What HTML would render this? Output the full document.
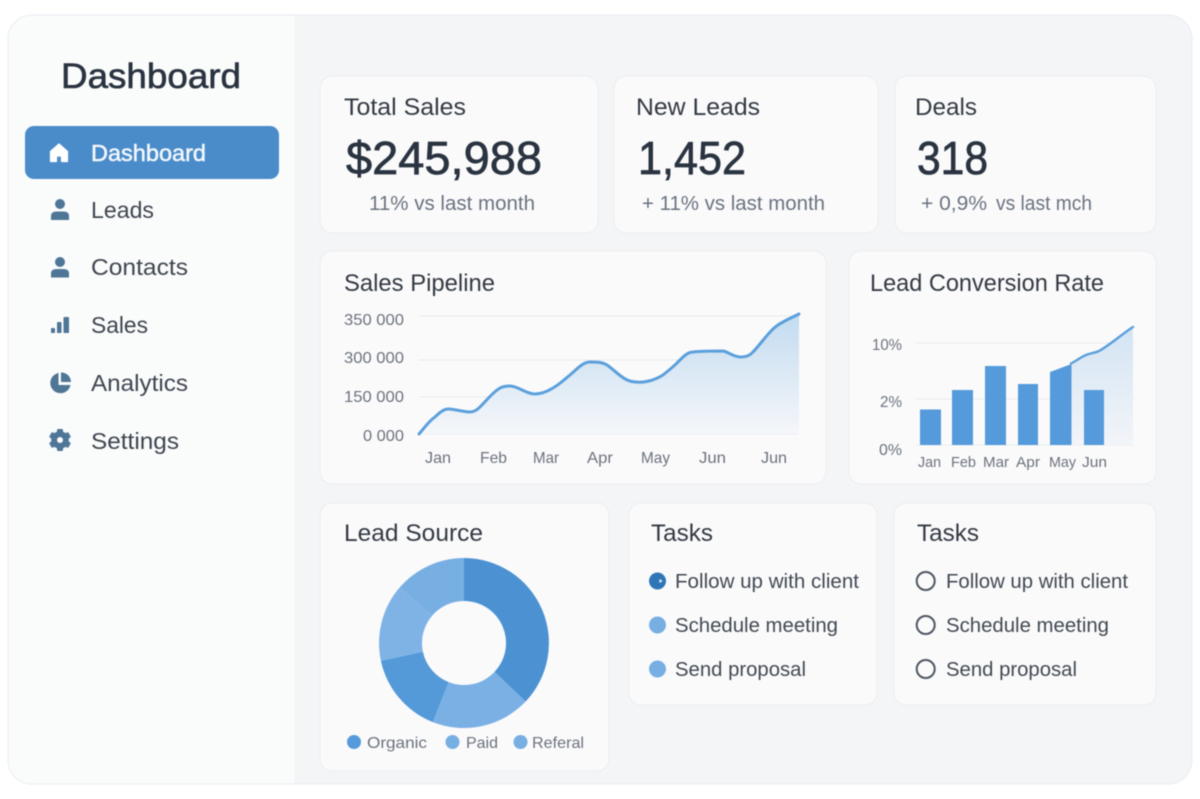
<!DOCTYPE html>
<html lang="en">
<head>
<meta charset="utf-8">
<title>Dashboard</title>
<style>
html,body{margin:0;padding:0;background:#fff;width:1200px;height:799px;overflow:hidden}
svg{display:block;filter:blur(.4px)}
text{font-family:"Liberation Sans",sans-serif}
.card{fill:#fafafb;stroke:#ebedf0;stroke-width:1}
.h{font-size:24px;fill:#343a43}
.big{font-size:46px;fill:#2a3340;stroke:#2a3340;stroke-width:.7}
.sub{font-size:20px;fill:#6b7380}
.nav{font-size:23px;fill:#3f4650}
.ax{font-size:16px;fill:#6c727c}
.task{font-size:20.5px;fill:#424953}
.grid{stroke:#e9ebee;stroke-width:1}
.ic{fill:#4f7697}
.bar{fill:#559ada}
</style>
</head>
<body>
<svg width="1200" height="799" viewBox="0 0 1200 799" xmlns="http://www.w3.org/2000/svg">
<defs>
<linearGradient id="g1" gradientUnits="userSpaceOnUse" x1="0" y1="314" x2="0" y2="434">
<stop offset="0" stop-color="#c3dbf0"/><stop offset="1" stop-color="#f5f7fa"/>
</linearGradient>
<linearGradient id="g2" gradientUnits="userSpaceOnUse" x1="0" y1="326" x2="0" y2="445">
<stop offset="0" stop-color="#d3e4f3"/><stop offset="1" stop-color="#f2f5f9"/>
</linearGradient>
<clipPath id="panel"><rect x="8" y="15" width="1184" height="769" rx="24"/></clipPath>
</defs>

<rect width="1200" height="799" fill="#ffffff"/>
<g clip-path="url(#panel)">
<rect x="8" y="15" width="1184" height="769" fill="#f4f5f6"/>
<rect x="8" y="15" width="287" height="769" fill="#fafbfb"/>
<rect x="295" y="15" width="1" height="769" fill="#eef0f2"/>
</g>
<rect x="8" y="15" width="1184" height="769" rx="24" fill="none" stroke="#e8edf3" stroke-width="1"/>

<!-- Sidebar -->
<text x="61" y="88" font-size="35" fill="#2a3340" stroke="#2a3340" stroke-width=".6" textLength="180" lengthAdjust="spacingAndGlyphs">Dashboard</text>
<rect x="25" y="126" width="254" height="53" rx="9" fill="#4a8cca"/>
<path d="M59 144 L67.5 151.5 V161.5 H61.5 V156 H56.5 V161.5 H50.5 V151.5 Z" fill="#fff" stroke="#fff" stroke-width="1.2" stroke-linejoin="round"/>
<text x="91" y="161" font-size="23" fill="#f2f7fc" stroke="#f2f7fc" stroke-width=".5" textLength="115" lengthAdjust="spacingAndGlyphs">Dashboard</text>

<circle class="ic" cx="60" cy="204" r="5"/>
<path class="ic" d="M51 220 V216 Q51 211.5 57 211.5 H63 Q69 211.5 69 216 V220 Z"/>
<text class="nav" x="91" y="218" textLength="63" lengthAdjust="spacingAndGlyphs">Leads</text>

<circle class="ic" cx="60" cy="262" r="5"/>
<path class="ic" d="M51 277.5 V273.5 Q51 269 57 269 H63 Q69 269 69 273.5 V277.5 Z"/>
<text class="nav" x="91" y="275" textLength="97" lengthAdjust="spacingAndGlyphs">Contacts</text>

<rect class="ic" x="51" y="328" width="4" height="5" rx=".8"/>
<rect class="ic" x="57" y="322" width="4.5" height="11" rx=".8"/>
<rect class="ic" x="63.5" y="317" width="5.5" height="16" rx=".8"/>
<text class="nav" x="91" y="333" textLength="57" lengthAdjust="spacingAndGlyphs">Sales</text>

<path class="ic" d="M58.5 373 A10.2 10.2 0 1 0 70.5 385 H58.5 Z"/>
<path class="ic" d="M61 372.5 A9.7 9.7 0 0 1 71 382 H61 Z"/>
<text class="nav" x="91" y="391" textLength="97" lengthAdjust="spacingAndGlyphs">Analytics</text>

<g transform="translate(60 440)">
<circle class="ic" r="8.8"/>
<g class="ic">
<rect x="-3" y="-11" width="6" height="22" rx="1"/>
<rect x="-3" y="-11" width="6" height="22" rx="1" transform="rotate(60)"/>
<rect x="-3" y="-11" width="6" height="22" rx="1" transform="rotate(120)"/>
</g>
<circle r="3" fill="#fafbfb"/>
</g>
<text class="nav" x="91" y="449" textLength="88" lengthAdjust="spacingAndGlyphs">Settings</text>

<!-- KPI cards -->
<rect class="card" x="320" y="76" width="278" height="157" rx="12"/>
<rect class="card" x="614" y="76" width="264" height="157" rx="12"/>
<rect class="card" x="895" y="76" width="261" height="157" rx="12"/>

<text class="h" x="344" y="115" textLength="122" lengthAdjust="spacingAndGlyphs">Total Sales</text>
<text class="big" x="346" y="174" textLength="196" lengthAdjust="spacingAndGlyphs">$245,988</text>
<text class="sub" x="369" y="210" textLength="166" lengthAdjust="spacingAndGlyphs">11% vs last month</text>

<text class="h" x="636" y="115" textLength="124" lengthAdjust="spacingAndGlyphs">New Leads</text>
<text class="big" x="638" y="174" textLength="108" lengthAdjust="spacingAndGlyphs">1,452</text>
<text class="sub" x="642" y="210" textLength="183" lengthAdjust="spacingAndGlyphs">+ 11% vs last month</text>

<text class="h" x="915" y="115" textLength="62" lengthAdjust="spacingAndGlyphs">Deals</text>
<text class="big" x="917" y="174" textLength="71" lengthAdjust="spacingAndGlyphs">318</text>
<text class="sub" x="921" y="210" textLength="66" lengthAdjust="spacingAndGlyphs">+ 0,9%</text>
<text class="sub" x="996" y="210" textLength="96" lengthAdjust="spacingAndGlyphs">vs last mch</text>

<!-- Sales Pipeline -->
<rect class="card" x="320" y="251" width="506" height="233" rx="12"/>
<text class="h" x="344" y="291" textLength="151" lengthAdjust="spacingAndGlyphs">Sales Pipeline</text>
<line class="grid" x1="419" y1="316" x2="799" y2="316"/>
<line class="grid" x1="419" y1="360" x2="799" y2="360"/>
<line class="grid" x1="419" y1="397" x2="799" y2="397"/>
<line class="grid" x1="419" y1="434" x2="799" y2="434"/>
<path fill="url(#g1)" d="M419 434 C425 427 430 420 435 417 C440 412 444 409 448 409 C455 409 463 412 470 412 C474 412 477 410 480 407 C487 400 493 392 500 388 C504 386 507 386 510 386 C518 386 526 394 535 394 C542 394 548 391 553 388 C560 384 565 379 570 375 C577 369 583 362 590 362 C597 362 602 362 607 365 C616 371 624 382 636 382 C645 383 655 380 663 375 C668 371 673 367 677 363 C682 358 687 352 693 352 C702 351 713 351 723 351 C729 352 733 357 741 357 C746 357 749 356 752 353 C759 346 765 337 772 330 C776 326 779 324 783 322 C788 319 793 317 799 314 L799 434 Z"/>
<path fill="none" stroke="#5ba0dc" stroke-width="3" stroke-linecap="round" d="M419 434 C425 427 430 420 435 417 C440 412 444 409 448 409 C455 409 463 412 470 412 C474 412 477 410 480 407 C487 400 493 392 500 388 C504 386 507 386 510 386 C518 386 526 394 535 394 C542 394 548 391 553 388 C560 384 565 379 570 375 C577 369 583 362 590 362 C597 362 602 362 607 365 C616 371 624 382 636 382 C645 383 655 380 663 375 C668 371 673 367 677 363 C682 358 687 352 693 352 C702 351 713 351 723 351 C729 352 733 357 741 357 C746 357 749 356 752 353 C759 346 765 337 772 330 C776 326 779 324 783 322 C788 319 793 317 799 314"/>
<text class="ax" x="344" y="325" textLength="60" lengthAdjust="spacingAndGlyphs">350 000</text>
<text class="ax" x="344" y="363" textLength="60" lengthAdjust="spacingAndGlyphs">300 000</text>
<text class="ax" x="344" y="402" textLength="60" lengthAdjust="spacingAndGlyphs">150 000</text>
<text class="ax" x="363" y="441" textLength="41" lengthAdjust="spacingAndGlyphs">0 000</text>
<text class="ax" x="425" y="463" textLength="26" lengthAdjust="spacingAndGlyphs">Jan</text>
<text class="ax" x="480" y="463" textLength="27" lengthAdjust="spacingAndGlyphs">Feb</text>
<text class="ax" x="533" y="463" textLength="26" lengthAdjust="spacingAndGlyphs">Mar</text>
<text class="ax" x="587" y="463" textLength="26" lengthAdjust="spacingAndGlyphs">Apr</text>
<text class="ax" x="641" y="463" textLength="29" lengthAdjust="spacingAndGlyphs">May</text>
<text class="ax" x="699" y="463" textLength="27" lengthAdjust="spacingAndGlyphs">Jun</text>
<text class="ax" x="761" y="463" textLength="26" lengthAdjust="spacingAndGlyphs">Jun</text>

<!-- Lead Conversion Rate -->
<rect class="card" x="849" y="251" width="307" height="233" rx="12"/>
<text class="h" x="870" y="291" textLength="234" lengthAdjust="spacingAndGlyphs">Lead Conversion Rate</text>
<line class="grid" x1="916" y1="343" x2="1134" y2="343"/>
<line class="grid" x1="916" y1="399" x2="1134" y2="399"/>
<line class="grid" x1="916" y1="445" x2="1134" y2="445"/>
<path fill="url(#g2)" d="M1071 364 C1076 361 1081 357 1086 355 C1091 353 1095 353 1099 351 C1110 345 1122 334 1133 327 V445 H1071 Z"/>
<rect class="bar" x="920" y="409.5" width="21" height="35.5"/>
<rect class="bar" x="952" y="390" width="21" height="55"/>
<rect class="bar" x="985" y="366" width="21" height="79"/>
<rect class="bar" x="1018" y="384" width="20" height="61"/>
<path class="bar" d="M1050 372 L1071.5 364 V445 H1050 Z"/>
<rect class="bar" x="1084" y="390" width="20" height="55"/>
<path fill="none" stroke="#5ba0dc" stroke-width="2.4" stroke-linecap="round" d="M1071 363.5 C1076 361 1081 357 1086 355 C1091 353 1095 353 1099 351 C1110 345 1122 334 1133 327"/>
<text class="ax" x="872" y="350" textLength="30" lengthAdjust="spacingAndGlyphs">10%</text>
<text class="ax" x="880" y="407" textLength="22" lengthAdjust="spacingAndGlyphs">2%</text>
<text class="ax" x="879" y="455" textLength="23" lengthAdjust="spacingAndGlyphs">0%</text>
<text class="ax" style="font-size:15px" x="918" y="467" textLength="23" lengthAdjust="spacingAndGlyphs">Jan</text>
<text class="ax" style="font-size:15px" x="951" y="467" textLength="25" lengthAdjust="spacingAndGlyphs">Feb</text>
<text class="ax" style="font-size:15px" x="983" y="467" textLength="26" lengthAdjust="spacingAndGlyphs">Mar</text>
<text class="ax" style="font-size:15px" x="1016" y="467" textLength="24" lengthAdjust="spacingAndGlyphs">Apr</text>
<text class="ax" style="font-size:15px" x="1049" y="467" textLength="27" lengthAdjust="spacingAndGlyphs">May</text>
<text class="ax" style="font-size:15px" x="1082" y="467" textLength="25" lengthAdjust="spacingAndGlyphs">Jun</text>

<!-- Lead Source -->
<rect class="card" x="320" y="503" width="289" height="268" rx="12"/>
<text class="h" x="344" y="541" textLength="139" lengthAdjust="spacingAndGlyphs">Lead Source</text>
<path fill="#4c92d2" d="M464 558 A85 85 0 0 1 525.6 701.5 L494.5 671.9 A42 42 0 0 0 464 601 Z"/>
<path fill="#7ab0e4" d="M525.6 701.5 A85 85 0 0 1 432.8 722.1 L448.6 682.1 A42 42 0 0 0 494.5 671.9 Z"/>
<path fill="#5499d8" d="M432.8 722.1 A85 85 0 0 1 380.9 660.7 L422.9 651.7 A42 42 0 0 0 448.6 682.1 Z"/>
<path fill="#7fb3e6" d="M380.9 660.7 A85 85 0 0 1 399.4 587.8 L432.1 615.7 A42 42 0 0 0 422.9 651.7 Z"/>
<path fill="#78afe3" d="M399.4 587.8 A85 85 0 0 1 464 558 L464 601 A42 42 0 0 0 432.1 615.7 Z"/>
<circle class="bar" cx="354" cy="742" r="7"/>
<text class="ax" x="367" y="748" textLength="60" lengthAdjust="spacingAndGlyphs">Organic</text>
<circle cx="452.5" cy="742" r="7" fill="#78afe3"/>
<text class="ax" x="466" y="748" textLength="32" lengthAdjust="spacingAndGlyphs">Paid</text>
<circle cx="520.5" cy="742" r="7" fill="#78afe3"/>
<text class="ax" x="532" y="748" textLength="52" lengthAdjust="spacingAndGlyphs">Referal</text>

<!-- Tasks 1 -->
<rect class="card" x="629" y="503" width="248" height="202" rx="12"/>
<text class="h" x="651" y="541" textLength="62" lengthAdjust="spacingAndGlyphs">Tasks</text>
<circle cx="657.5" cy="581" r="8.5" fill="#2f76b8"/>
<path d="M659.5 579 L662.5 581 L659.5 583 Z" fill="#f2f7fc"/>
<circle cx="657.5" cy="625" r="8.5" fill="#78afe3"/>
<circle cx="657.5" cy="669" r="8.5" fill="#78afe3"/>
<text class="task" x="675" y="588" textLength="184" lengthAdjust="spacingAndGlyphs">Follow up with client</text>
<text class="task" x="675" y="632" textLength="163" lengthAdjust="spacingAndGlyphs">Schedule meeting</text>
<text class="task" x="675" y="676" textLength="131" lengthAdjust="spacingAndGlyphs">Send proposal</text>

<!-- Tasks 2 -->
<rect class="card" x="894" y="503" width="262" height="202" rx="12"/>
<text class="h" x="917" y="541" textLength="62" lengthAdjust="spacingAndGlyphs">Tasks</text>
<g fill="none" stroke="#4d5661" stroke-width="2">
<circle cx="925.7" cy="581" r="9"/>
<circle cx="925.7" cy="625" r="9"/>
<circle cx="925.7" cy="669" r="9"/>
</g>
<text class="task" x="946" y="588" textLength="182" lengthAdjust="spacingAndGlyphs">Follow up with client</text>
<text class="task" x="946" y="632" textLength="163" lengthAdjust="spacingAndGlyphs">Schedule meeting</text>
<text class="task" x="946" y="676" textLength="131" lengthAdjust="spacingAndGlyphs">Send proposal</text>
</svg>
</body>
</html>
